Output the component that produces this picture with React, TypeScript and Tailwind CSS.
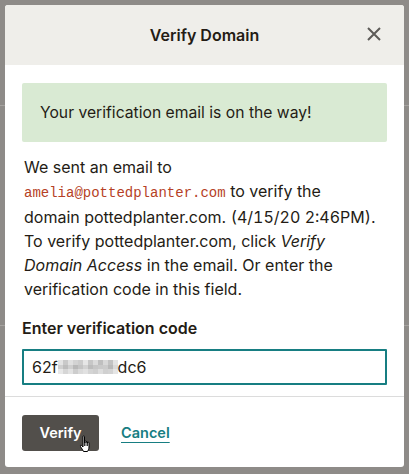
import React from "react";

const blurCols = [
  ["#e4e4e4", "#d0d0d0", "#e8e8e8"],
  ["#c9c9c9", "#bdbdbd", "#d6d6d6"],
  ["#e0e0e0", "#cfcfcf", "#e2e2e2"],
  ["#d3d3d3", "#b8b8b8", "#cdcdcd"],
  ["#cccccc", "#c4c4c4", "#dadada"],
  ["#e6e6e6", "#d2d2d2", "#e1e1e1"],
  ["#c7c7c7", "#bcbcbc", "#d4d4d4"],
  ["#dbdbdb", "#c6c6c6", "#cfcfcf"],
  ["#bfbfbf", "#c9c9c9", "#dddddd"],
  ["#d8d8d8", "#cbcbcb", "#d0d0d0"],
  ["#c2c2c2", "#b9b9b9", "#d3d3d3"],
  ["#e3e3e3", "#d9d9d9", "#e5e5e5"],
];

export default function App() {
  const font = { fontFamily: "Inter, 'Noto Sans', sans-serif" };
  return (
    <div
      className="relative w-[409px] h-[474px] bg-[#8e8b88] pt-[5px] pl-[5px] overflow-hidden"
      style={font}
    >
      <div className="absolute left-0 right-0 top-[105px] h-px bg-[#a6a3a0]" />
      <div className="absolute left-0 right-0 top-[325px] h-px bg-[#a6a3a0]" />
      <div className="relative w-[399px] h-[462px] bg-white rounded-[3px] flex flex-col overflow-hidden text-[#241c15]">
        <div className="relative h-[60px] bg-[#efeeea] flex items-center justify-center shrink-0">
          <span className="text-[16px] font-semibold">Verify Domain</span>
          <svg
            className="absolute left-[362px] top-[22px]"
            width="14"
            height="14"
            viewBox="0 0 14 14"
          >
            <path d="M1 1 L13 13 M13 1 L1 13" stroke="#5d5b58" strokeWidth="2" fill="none" />
          </svg>
        </div>
        <div className="px-[17px] pt-[18px] flex flex-col">
          <div className="h-[59px] bg-[#d9ead3] rounded-[2px] pl-[18px] flex items-center text-[15.7px]">
            Your verification email is on the way!
          </div>
          <p className="mt-[13px] pl-[2px] text-[16px] leading-[24px] whitespace-nowrap">
            We sent an email to
            <br />
            <span
              className="text-[14px] text-[#b63f26]"
              style={{ fontFamily: "'Liberation Mono', monospace" }}
            >
              amelia@pottedplanter.com
            </span>{" "}
            to verify the
            <br />
            domain pottedplanter.com. <span className="tabular-nums">(4/15/20 2:46PM)</span>.
            <br />
            To verify pottedplanter.com, click <em>Verify</em>
            <br />
            <em>Domain Access</em> in the email. Or enter the
            <br />
            verification code in this field.
          </p>
          <div className="mt-[15px] text-[16px] leading-[24px] font-semibold">
            Enter verification code
          </div>
          <div className="mt-[9px] h-[36px] border-2 border-[#177e82] rounded-[1px] flex items-center pl-[8px] text-[16px]">
            <span>62f</span>
            <span className="flex h-[14px] w-[60px]">
              {blurCols.map((col, i) => (
                <span key={i} className="flex flex-col w-[5px] h-[14px]">
                  {col.map((c, j) => (
                    <span key={j} className="flex-1" style={{ backgroundColor: c }} />
                  ))}
                </span>
              ))}
            </span>
            <span>dc6</span>
          </div>
        </div>
        <div className="mt-[11px] border-t border-[#dcdcdc]" />
        <div className="px-[17px] pt-[18px] flex items-center">
          <div className="relative w-[77px] h-[36px] bg-[#524f4b] rounded-[3px] flex items-center justify-center text-white text-[14.5px] font-semibold">
            Verify
            <svg
              className="absolute left-[57px] top-[20px]"
              width="14"
              height="18"
              viewBox="0 0 14 18"
            >
              <path
                d="M4 1.5 C4 0.8 5.5 0.8 5.5 1.5 L5.5 8 L5.5 6.5 C5.5 5.8 7 5.8 7 6.5 L7 8 L7 7 C7 6.3 8.5 6.3 8.5 7 L8.5 8.5 L8.5 7.8 C8.5 7.1 10 7.1 10 7.8 L10 12 C10 14 9 15.5 8.5 16.5 L4.5 16.5 C4 15 2.5 13.5 1.5 11.5 C1 10.5 1.8 9.8 2.6 10.5 L4 12 Z"
                fill="white"
                stroke="black"
                strokeWidth="1"
                strokeLinejoin="round"
              />
              <path d="M5.5 8 V11 M7 8 V11 M8.5 8.5 V11" stroke="black" strokeWidth="0.8" />
            </svg>
          </div>
          <span className="ml-[22px] text-[14.5px] font-semibold text-[#177e82] underline underline-offset-[4px] decoration-[1px]">
            Cancel
          </span>
        </div>
      </div>
    </div>
  );
}
